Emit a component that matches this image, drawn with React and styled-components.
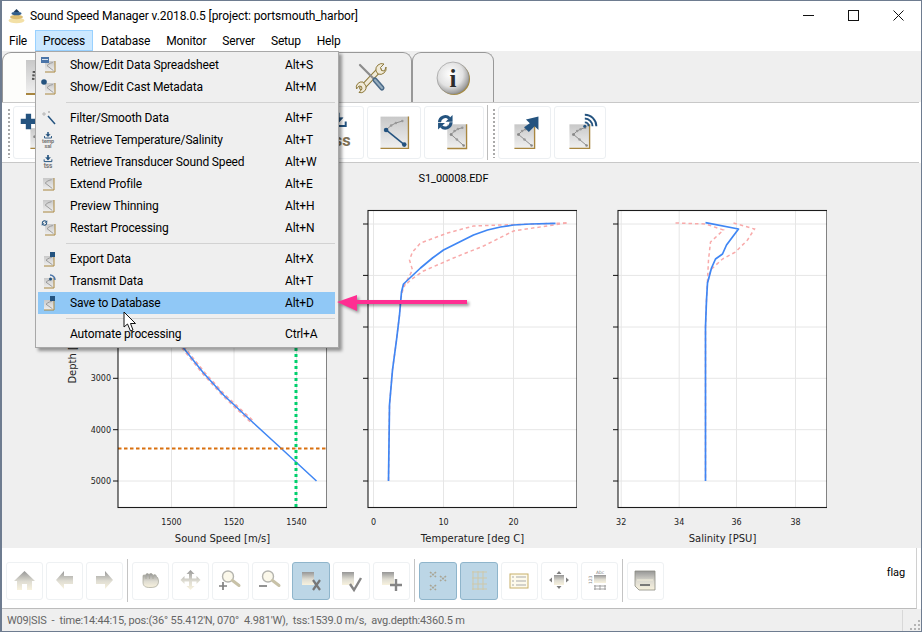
import React from "react";
import styled, { createGlobalStyle } from "styled-components";

const UI_FONT = `Roboto, "Noto Sans", sans-serif`;
const PLOT_FONT = `"DejaVu Sans", sans-serif`;

const GlobalStyle = createGlobalStyle`
  html, body { margin: 0; padding: 0; background: #fff; overflow: hidden; }
  body { font-family: ${UI_FONT}; font-size: 12px; color: #000; letter-spacing: -0.1px; }
`;

const Window = styled.div`
  position: relative;
  box-sizing: border-box;
  width: 922px;
  height: 632px;
  display: flex;
  flex-direction: column;
  background: #fff;
  border: 1px solid #6e7c90;
  border-left-width: 2px;
  overflow: hidden;
`;

const TitleBar = styled.div`
  height: 29px;
  flex: none;
  display: flex;
  align-items: center;
  padding-left: 6px;
`;

const TitleText = styled.span`
  margin: 1px 0 0 5px;
  white-space: nowrap;
`;

const WindowControls = styled.div`
  margin-left: auto;
  display: flex;
  align-items: center;
  gap: 34px;
  padding-right: 17px;
`;

const MenuBar = styled.nav`
  height: 21px;
  flex: none;
  display: flex;
  align-items: stretch;
  margin-left: -1px;
  letter-spacing: -0.2px;
`;

const MenuTitle = styled.div`
  display: flex;
  align-items: center;
  padding: 1px 7px 0;
  box-sizing: border-box;
  border: 1px solid ${(p) => (p.$open ? "#99d1ff" : "transparent")};
  background: ${(p) => (p.$open ? "#cce8ff" : "transparent")};
`;

const TabBar = styled.div`
  height: 51px;
  flex: none;
  display: flex;
  align-items: flex-end;
  background: #efefef;
`;

const Tab = styled.div`
  box-sizing: border-box;
  width: 82px;
  height: 50px;
  display: flex;
  align-items: center;
  justify-content: center;
  background: ${(p) => (p.$selected ? "#fdfdfb" : "#efefef")};
  border: 1px solid #989898;
  border-bottom: none;
  border-radius: 9px 9px 0 0;
`;

const Toolbar = styled.div`
  height: 61px;
  flex: none;
  box-sizing: border-box;
  display: flex;
  align-items: center;
  gap: 3px;
  margin-right: 2px;
  padding-left: 4px;
  background: #fff;
  border: 1px solid #c8c8c8;
  border-left: none;
  border-right: none;
`;

const Grip = styled.div`
  width: 2px;
  height: 50px;
  margin: 0 ${(p) => p.$right}px 0 ${(p) => p.$left}px;
  background-image: radial-gradient(circle, #aaa 0.8px, transparent 1px);
  background-size: 2px 4px;
`;

const ToolButton = styled.div`
  box-sizing: border-box;
  flex: none;
  width: ${(p) => p.$w}px;
  height: 53px;
  border: 1px solid #eceff2;
  border-radius: 3px;
  display: flex;
  align-items: center;
  justify-content: center;
`;

const ToolSep = styled.div`
  width: 1px;
  height: 55px;
  background: #bdbdbd;
`;

const Canvas = styled.main`
  flex: 1;
  min-height: 0;
  display: flex;
  flex-direction: column;
  background: #efefef;
`;

const PlotTitle = styled.div`
  height: 37px;
  flex: none;
  box-sizing: border-box;
  display: flex;
  align-items: center;
  justify-content: center;
  padding: 0 16px 6px 0;
  font-size: 11px;
`;

const PlotRow = styled.div`
  display: flex;
  padding-left: 58px;
`;

const BottomBar = styled.div`
  height: 61px;
  flex: none;
  box-sizing: border-box;
  display: flex;
  align-items: flex-start;
  gap: 3px;
  padding: 14px 0 0 4px;
  margin-right: 4px;
  background: #fff;
  border-bottom: 1px solid #bcbcbc;
  border-right: 1px solid #d0d0d0;
`;

const BarButton = styled.div`
  box-sizing: border-box;
  flex: none;
  width: ${(p) => (p.$active ? 38 : 37)}px;
  height: 38px;
  border: 1px solid ${(p) => (p.$active ? "#8fb5cb" : "#eef1f3")};
  border-radius: 3px;
  background: ${(p) => (p.$active ? "#bcd6e6" : "#fff")};
  svg { display: block; margin: -1px; }
`;

const BarSep = styled.div`
  width: 1px;
  height: 43px;
  margin: -3px 1px 0;
  background: #c4c4c4;
`;

const FlagLabel = styled.span`
  margin: 1px 11px 0 auto;
  font-size: 11px;
  line-height: 20px;
`;

const StatusBar = styled.footer`
  flex: none;
  height: 22px;
  box-sizing: border-box;
  display: flex;
  align-items: center;
  padding: 1px 0 0 5px;
  background: #efefef;
  color: #666;
  font-size: 11px;
  letter-spacing: -0.19px;
  white-space: pre;
`;

const StatusGrip = styled.div`
  margin-left: auto;
  display: flex;
  align-items: flex-end;
  height: 100%;
  border-left: 1px solid #d8d8d8;
  padding-left: 6px;
  box-sizing: border-box;
`;

const Menu = styled.div`
  position: absolute;
  left: 33px;
  top: 50px;
  width: 304px;
  box-sizing: border-box;
  padding: 2px 3px 2px 2px;
  background: #efefef;
  border: 1px solid #a8a8a8;
  box-shadow: 3px 3px 3px rgba(0, 0, 0, 0.38);
  z-index: 3;
`;

const MenuRow = styled.div`
  height: 22px;
  display: flex;
  align-items: center;
  letter-spacing: -0.15px;
  background: ${(p) => (p.$active ? "#90c8f6" : "transparent")};
`;

const MenuIconSlot = styled.div`
  width: 32px;
  padding-left: 3px;
  box-sizing: border-box;
  display: flex;
  align-items: center;
  svg { overflow: visible; }
`;

const MenuLabel = styled.span`
  width: 215px;
  white-space: nowrap;
`;

const MenuDivider = styled.div`
  height: 1px;
  margin: 4px 0 4px 28px;
  background: #d2d2d2;
`;

const ArrowOverlay = styled.svg`
  position: absolute;
  left: 331px;
  top: 288px;
  z-index: 4;
  filter: drop-shadow(2px 2px 1.5px rgba(0, 0, 0, 0.4));
`;

const CursorOverlay = styled.svg`
  position: absolute;
  left: 120px;
  top: 310px;
  z-index: 5;
`;

const HiddenDefs = styled.svg`
  display: block;
  position: absolute;
  width: 0;
  height: 0;
`;

const Defs = () => (
  <HiddenDefs aria-hidden="true">
    <defs>
      <linearGradient id="paper" x1="0" y1="0" x2="0" y2="1">
        <stop offset="0" stopColor="#c8c8c8" />
        <stop offset="1" stopColor="#f0f0f0" />
      </linearGradient>
      <linearGradient id="fade" x1="0" y1="0" x2="0" y2="1">
        <stop offset="0" stopColor="#969696" />
        <stop offset="0.55" stopColor="#dedcd2" />
        <stop offset="1" stopColor="#f8f2de" />
      </linearGradient>
      <radialGradient id="silver" cx="0.42" cy="0.38" r="0.65">
        <stop offset="0" stopColor="#ffffff" />
        <stop offset="0.6" stopColor="#e2e2e2" />
        <stop offset="1" stopColor="#8e8e8e" />
      </radialGradient>
    </defs>
  </HiddenDefs>
);

const NAVY = "#24537f";

// sheet of paper with a small sound speed profile on it
const Paper = ({ x, y, w, h, dark }) => {
  const px = (f) => x + f * w;
  const py = (f) => y + f * h;
  const r = w > 15 ? 1.3 : 0;
  const upper = [[0.78, 0.14], [0.55, 0.2], [0.38, 0.28], [0.2, 0.42]];
  const knee = upper[3];
  const end = [0.85, 0.88];
  return (
    <g>
      <rect x={x} y={y} width={w} height={h} fill="url(#paper)" />
      <path d={`M${x + w} ${y}V${y + h}H${x}`} fill="none" stroke="#a8863f" strokeWidth={w > 15 ? 1.4 : 1} />
      <polyline points={upper.map((p) => `${px(p[0])},${py(p[1])}`).join(" ")} fill="none" stroke="#8a8a8a" strokeWidth={w > 15 ? 1 : 0.8} />
      <line x1={px(knee[0])} y1={py(knee[1])} x2={px(end[0])} y2={py(end[1])} stroke={dark ? NAVY : "#8a8a8a"} strokeWidth={dark ? 1.6 : w > 15 ? 1 : 0.8} />
      {r > 0 && upper.map((p) => <circle key={p[0]} cx={px(p[0])} cy={py(p[1])} r={r} fill="#999" />)}
      {r > 0 && <circle cx={px(knee[0])} cy={py(knee[1])} r={dark ? 2.4 : r} fill={dark ? NAVY : "#888"} />}
      {r > 0 && <circle cx={px(end[0])} cy={py(end[1])} r={dark ? 2.4 : r} fill={dark ? NAVY : "#888"} />}
      {r > 0 && !dark && <circle cx={px(0.5)} cy={py(0.63)} r={r} fill="#999" />}
    </g>
  );
};

const Download = ({ cx, y, s = 1 }) => (
  <g transform={`translate(${cx} ${y}) scale(${s})`} fill="none" stroke={NAVY}>
    <path d="M0 0V8" strokeWidth="3" />
    <path d="M-4.5 4.5L0 9.5L4.5 4.5Z" fill={NAVY} strokeWidth="0.6" />
    <path d="M-7 8V12H7V8" strokeWidth="1.8" />
  </g>
);

const Refresh = ({ cx, cy, r = 6, w = 3.2 }) => (
  <g fill="none" stroke={NAVY} strokeWidth={w}>
    <path d={`M${cx - r} ${cy}A${r} ${r} 0 0 1 ${cx + r * 0.7} ${cy - r * 0.7}`} />
    <path d={`M${cx + r} ${cy}A${r} ${r} 0 0 1 ${cx - r * 0.7} ${cy + r * 0.7}`} />
    <path d={`M${cx + r * 1.25} ${cy - r * 1.25}V${cy - r * 0.1}H${cx + r * 0.05}Z`} fill={NAVY} stroke="none" />
    <path d={`M${cx - r * 1.25} ${cy + r * 1.25}V${cy + r * 0.1}H${cx - r * 0.05}Z`} fill={NAVY} stroke="none" />
  </g>
);

const Signal = ({ cx, cy }) => (
  <g fill="none" stroke={NAVY} strokeWidth="2">
    <path d={`M${cx} ${cy - 4}A4 4 0 0 1 ${cx + 4} ${cy}`} />
    <path d={`M${cx} ${cy - 8}A8 8 0 0 1 ${cx + 8} ${cy}`} />
    <path d={`M${cx} ${cy - 12}A12 12 0 0 1 ${cx + 12} ${cy}`} />
    <circle cx={cx} cy={cy} r="1.6" fill={NAVY} stroke="none" />
  </g>
);

// icons of the upper toolbar, drawn on the whole button face (height 53)
const TOP_TOOLS = [
  { w: 56, draw: (
    <>
      <Paper x={17} y={22} w={22} h={21} />
      <path d="M15 7V23M7 15H23" stroke={NAVY} strokeWidth="5.5" />
    </>
  ) },
  { w: 56, draw: <Paper x={14} y={10} w={28} h={33} /> },
  { w: 56, draw: <Paper x={14} y={10} w={28} h={33} /> },
  { w: 56, draw: <Paper x={14} y={10} w={28} h={33} /> },
  { w: 56, draw: <Paper x={14} y={10} w={28} h={33} /> },
  { w: 56, draw: (
    <>
      <Download cx={30} y={6} s={1.15} />
      <text x={43} y={40} textAnchor="end" fontFamily={UI_FONT} fontWeight="700" fontSize="17" fill="#7e7054">tss</text>
    </>
  ) },
  { w: 54, draw: <Paper x={13} y={10} w={29} h={33} dark /> },
  { w: 60, draw: (
    <>
      <Paper x={23} y={18} w={20} h={25} />
      <Refresh cx={21} cy={16} />
    </>
  ) },
];

const Arrowed = () => (
  <>
    <Paper x={16} y={18} w={21} h={25} />
    <path d="M26 21L32 17L28 13L41 10V24L37 20L31 26Z" fill={NAVY} />
  </>
);

const Signalled = () => (
  <>
    <Paper x={15} y={18} w={21} h={25} />
    <Signal cx={31} cy={20} />
  </>
);

const TabPaper = () => (
  <svg width="36" height="38" viewBox="0 0 36 38">
    <rect x="1" y="1" width="34" height="34" fill="url(#paper)" />
    <path d="M1 35H35" stroke="#a8863f" strokeWidth="2" />
    <path d="M9 12L8 22" stroke="#555" strokeWidth="2.5" strokeDasharray="2 1.5" />
  </svg>
);

const ToolsIcon = () => (
  <svg width="32" height="32" viewBox="0 0 32 32">
    <g fill="none" strokeLinecap="round">
      <path d="M7 26L24 8" stroke="#8e7a3c" strokeWidth="5.5" />
      <path d="M7 26L24 8" stroke="#f0ead8" strokeWidth="3.5" />
      <path d="M5 3L19 17" stroke="#8c8c8c" strokeWidth="2.2" />
      <path d="M20 18L27 26" stroke="#4a6a88" strokeWidth="5" />
      <path d="M20 18L27 26" stroke="#97aebf" strokeWidth="2" />
    </g>
    <path d="M21 9A6 6 0 0 1 29 2L25.5 5.5L26.5 8.5L29.5 9L31 5A6 6 0 0 1 23 12Z" fill="#f0ead8" stroke="#8e7a3c" />
    <path d="M9 24A5.5 5.5 0 0 1 2 30.5L5 27L4.5 24.5L2 24L-0.5 27A5.5 5.5 0 0 1 6 20Z" fill="#f0ead8" stroke="#8e7a3c" transform="translate(2 0)" />
  </svg>
);

const InfoIcon = () => (
  <svg width="36" height="36" viewBox="0 0 36 36">
    <circle cx="19" cy="19" r="16" fill="#a58a3e" />
    <circle cx="18" cy="18" r="16" fill="url(#silver)" stroke="#8f8f8f" strokeWidth="0.6" />
    <text x="18" y="27" textAnchor="middle" fontFamily={`"Liberation Serif", serif`} fontWeight="700" fontSize="25" fill="#2c2c2c">i</text>
  </svg>
);

const AppIcon = () => (
  <svg width="17" height="16" viewBox="0 0 17 16">
    <ellipse cx="8.5" cy="12.5" rx="8" ry="2.8" fill="#f3e0a6" />
    <ellipse cx="8.5" cy="9" rx="6.5" ry="2.2" fill="#dcbd72" />
    <ellipse cx="8.5" cy="5.5" rx="5" ry="1.8" fill="#335f8c" />
    <path d="M8.5 1L5.5 4H11.5Z" fill="#1d3c5e" />
  </svg>
);

const Lens = ({ children }) => (
  <>
    <circle cx="16" cy="14.5" r="5.5" fill="#fbf8ea" stroke="#b4b4ae" strokeWidth="1.4" />
    <path d="M20.5 18.5L27 23.5" stroke="#c8c2a8" strokeWidth="3" strokeLinecap="round" />
    {children}
  </>
);

// icons of the lower toolbar, 37 x 37
const BAR_TOOLS = [
  { draw: <path d="M18.5 9L29 19H26V28H21V22H16V28H11V19H8Z" fill="url(#fade)" /> },
  { draw: <path d="M10 18L18 9V14H27V22H18V27Z" fill="url(#fade)" /> },
  { draw: <path d="M27 18L19 9V14H10V22H19V27Z" fill="url(#fade)" /> },
  { sep: true },
  { draw: (
    <>
      <path d="M11 14C11 12.5 13 12.5 13.5 14C13.5 11 16.5 11 17 13C17.5 11 20.5 11 21 13.5C21.5 12 24.5 12.5 24.5 14.5C26.5 15.5 27 20 26 22C25 25 22 25.5 18 25.5C13 25.5 11 24 11 20Z" fill="url(#fade)" stroke="#a4a496" strokeWidth="0.7" />
      <path d="M14 14V17M17.5 13.5V17M21 14V17" stroke="#a4a496" strokeWidth="0.7" />
    </>
  ) },
  { draw: <path d="M18.5 8L22.5 12H20V16.5H24.5V14L28.5 18L24.5 22V19.5H20V24H22.5L18.5 28L14.5 24H17V19.5H12.5V22L8.5 18L12.5 14V16.5H17V12H14.5Z" fill="url(#fade)" /> },
  { draw: <Lens><path d="M11 20V28M7 24H15" stroke="#808080" strokeWidth="1.7" /></Lens> },
  { draw: <Lens><path d="M7 24H15" stroke="#808080" strokeWidth="1.7" /></Lens> },
  { active: true, draw: (
    <>
      <rect x="10" y="10" width="12" height="13" fill="url(#fade)" />
      <path d="M21 18L28 28M28 18L21 28" stroke="#777" strokeWidth="2.2" />
    </>
  ) },
  { draw: (
    <>
      <rect x="9" y="10" width="12" height="13" fill="url(#fade)" />
      <path d="M17 22L21 28L28 16" fill="none" stroke="#858585" strokeWidth="2.4" />
    </>
  ) },
  { draw: (
    <>
      <rect x="9" y="10" width="12" height="13" fill="url(#fade)" />
      <path d="M23 17V29M17 23H29" stroke="#858585" strokeWidth="2.4" />
    </>
  ) },
  { sep: true },
  { active: true, draw: (
    <g fill="none" stroke="#a9a595" strokeWidth="1.6" strokeDasharray="2 1">
      <path d="M11 10L17 15M17 10L11 15" />
      <path d="M21 14L27 19M27 14L21 19" />
      <path d="M11 23L17 28M17 23L11 28" />
    </g>
  ) },
  { active: true, draw: <path d="M12 10H27M12 16H27M12 22H27M12 27H27M13 9V28M18 9V28M23 9V28" fill="none" stroke="#cfc8a8" strokeWidth="1" /> },
  { draw: (
    <>
      <rect x="9" y="12" width="18" height="14" fill="#fdfaec" stroke="#c8b06a" />
      <path d="M15 15H25M15 19H25M15 23H25M11 15H13M11 19H13M11 23H13" stroke="#a9a9a9" strokeWidth="1.1" />
    </>
  ) },
  { draw: (
    <>
      <rect x="13" y="13" width="10" height="10" fill="url(#fade)" />
      <path d="M18 9L15.5 12H20.5ZM18 27L15.5 24H20.5ZM8 18L11 15.5V20.5ZM28 18L25 15.5V20.5Z" fill="#7e7e7e" />
    </>
  ) },
  { draw: (
    <>
      <rect x="13" y="13" width="12" height="8" fill="url(#fade)" />
      <path d="M13 24H25M13 27H25M14 23V28M19 23V28M24 23V28" stroke="#999" strokeWidth="0.9" />
      <text x="19" y="12" textAnchor="middle" fontFamily={PLOT_FONT} fontSize="4.5" fill="#888">Abc</text>
      <text transform="translate(11 22) rotate(-90)" fontFamily={PLOT_FONT} fontSize="4.5" fill="#888">123</text>
    </>
  ) },
  { sep: true },
  { draw: (
    <>
      <path d="M8 9H28V28H12L8 24Z" fill="url(#fade)" stroke="#8a8a80" strokeWidth="0.8" />
      <path d="M10 18H26" stroke="#f5f0dc" strokeWidth="1" />
      <path d="M13 23H23" stroke="#6d6d6d" strokeWidth="1.8" />
    </>
  ) },
];

const MiniPaper = () => <Paper x={4} y={4} w={10} h={11} />;

const MiniExport = () => (
  <>
    <Paper x={3} y={5} w={10} h={10} />
    <rect x="9" y="1" width="5" height="5" fill={NAVY} />
  </>
);

const MENU_GROUPS = [
  [
    { label: "Show/Edit Data Spreadsheet", key: "Alt+S", icon: (
      <>
        <MiniPaper />
        <rect x="0" y="0" width="8" height="6" fill="#4a74a8" />
        <rect x="1" y="2" width="6" height="1" fill="#d9e4f0" />
      </>
    ) },
    { label: "Show/Edit Cast Metadata", key: "Alt+M", icon: (
      <>
        <MiniPaper />
        <circle cx="3" cy="3" r="2.8" fill={NAVY} />
      </>
    ) },
  ],
  [
    { label: "Filter/Smooth Data", key: "Alt+F", icon: (
      <>
        <path d="M7 6L14 14" stroke={NAVY} strokeWidth="1.5" />
        <path d="M3 2V6M1 4H5M8 1V3M7 2H9" stroke="#aaa" strokeWidth="0.8" />
      </>
    ) },
    { label: "Retrieve Temperature/Salinity", key: "Alt+T", icon: (
      <>
        <Download cx={7} y={0} s={0.5} />
        <text x="7" y="11" textAnchor="middle" fontFamily={UI_FONT} fontWeight="700" fontSize="5.5" fill="#777">temp</text>
        <text x="7" y="16" textAnchor="middle" fontFamily={UI_FONT} fontWeight="700" fontSize="5.5" fill="#777">sal</text>
      </>
    ) },
    { label: "Retrieve Transducer Sound Speed", key: "Alt+W", icon: (
      <>
        <Download cx={7} y={1} s={0.55} />
        <text x="7" y="14" textAnchor="middle" fontFamily={UI_FONT} fontWeight="700" fontSize="6.5" fill="#777">tss</text>
      </>
    ) },
    { label: "Extend Profile", key: "Alt+E", icon: <Paper x={2} y={2} w={11} h={12} /> },
    { label: "Preview Thinning", key: "Alt+H", icon: <Paper x={2} y={2} w={11} h={12} /> },
    { label: "Restart Processing", key: "Alt+N", icon: (
      <>
        <MiniPaper />
        <Refresh cx={3.5} cy={3} r={2.2} w={1.1} />
      </>
    ) },
  ],
  [
    { label: "Export Data", key: "Alt+X", icon: <MiniExport /> },
    { label: "Transmit Data", key: "Alt+T", icon: (
      <>
        <Paper x={3} y={5} w={10} h={10} />
        <path d="M9 2A5 5 0 0 1 14 7" fill="none" stroke="#4a74a8" strokeWidth="1.5" />
        <circle cx="9.5" cy="6" r="1.5" fill={NAVY} />
      </>
    ) },
    { label: "Save to Database", key: "Alt+D", active: true, icon: <MiniExport /> },
  ],
  [{ label: "Automate processing", key: "Ctrl+A" }],
];

// depth grid; the labels of the first three sit behind the open menu in the picture
const Y_TICKS = [224, 275.4, 327, 378.3, 429.7, 481];
const Y_LABELS = [null, null, null, "3000", "4000", "5000"];

const PLOTS = [
  {
    left: 117.5, margin: 58, label: "Sound Speed [m/s]", labelled: true,
    grid: [[171, "1500"], [233.5, "1520"], [296, "1540"]],
    blue: "M155 224L150 250L158 300L183 348L203 373L223 395L253 423L277 445L316 481",
    pink: ["M150 224L148 250L157 300L184.200 347.500L204.200 372.500L224.200 394.500L254 422", "M160 224L152 250L160 300L182 348.500L202 373.500L222 395.500L252 424"],
  },
  {
    left: 367.5, margin: 41, label: "Temperature [deg C]",
    grid: [[373, "0"], [443, "10"], [513, "20"]],
    blue: "M555 223.3L530 224L513 225L500 227L487 230L473 235L457 243L443 250L432 258L420 268L403 284L401 292L399 315L396 340L392 370L389 405L388 481",
    pink: [
      "M566 223L500 225L473 226L447 233L420 243L412 252L409 260L412 270L403 287L400 300L399 315L396 340L392 370L389 405L388 481",
      "M566 223L513 231L483 246L453 258L423 271L410 280L403 287",
    ],
  },
  {
    left: 617.5, margin: 41, label: "Salinity [PSU]",
    grid: [[620.7, "32"], [678.7, "34"], [736, "36"], [795, "38"]],
    blue: "M705 222.7L738 229L732 237L726 245L722 254L715 259L711 268L707 283L706 300L705 327L705 481",
    pink: [
      "M675 223L705 224L723 230L710 242L708 260L707 280L706 300L705 327L705 481",
      "M733 223L754 229L747 240L735 252L722 259L710 270L707 283",
    ],
  },
];

const PlotSvg = styled.svg`
  display: block;
  flex: none;
  overflow: hidden;
  font-family: ${PLOT_FONT};
  letter-spacing: 0;
`;

const Plot = ({ plot }) => {
  const { left, margin, grid, label, blue, pink, labelled } = plot;
  const right = left + 209;
  return (
    <PlotSvg width={209 + margin} height={348} viewBox={`${left - margin} 200 ${209 + margin} 348`}>
      <rect x={left} y="210.5" width="209" height="297" fill="#fff" />
      {grid.map(([x]) => <line key={x} x1={x} x2={x} y1="210" y2="507" stroke="#e6e6e6" />)}
      {Y_TICKS.map((y) => <line key={y} x1={left} x2={right} y1={y} y2={y} stroke="#e6e6e6" />)}
      {pink.map((d) => <path key={d} d={d} fill="none" stroke="#f8aaaa" strokeWidth="1.5" strokeDasharray="3.5 3" />)}
      <path d={blue} fill="none" stroke="#3f86f4" strokeLinejoin="round" strokeWidth={labelled ? 1.5 : 1.7} />
      {labelled && <line x1="295.5" x2="295.5" y1="210" y2="507" stroke="#00d06c" strokeWidth="3" strokeDasharray="3 3" />}
      {labelled && <line x1={left} x2={right} y1="448.5" y2="448.5" stroke="#d9700f" strokeWidth="2.2" strokeDasharray="3.5 2.5" />}
      <rect x={left} y="210.5" width="209" height="297" fill="none" stroke="#1c1c1c" strokeWidth="1.1" />
      {Y_TICKS.map((y, i) => (
        <g key={y}>
          <line x1={left - 5} x2={left} y1={y} y2={y} stroke="#111" />
          {labelled && Y_LABELS[i] && <text x={left - 7} y={y + 3} textAnchor="end" fontSize="8" fill="#222">{Y_LABELS[i]}</text>}
        </g>
      ))}
      {grid.map(([x, t]) => <text key={t} x={x} y="525" textAnchor="middle" fontSize="8" fill="#222">{t}</text>)}
      <text x={left + 104.5} y="541.5" textAnchor="middle" fontSize="10" fill="#222">{label}</text>
      {labelled && <text transform="translate(75 358) rotate(-90)" textAnchor="middle" fontSize="10" fill="#222">Depth [m]</text>}
    </PlotSvg>
  );
};

const MENUS = ["File", "Process", "Database", "Monitor", "Server", "Setup", "Help"];

const ToolFace = ({ w, children }) => (
  <svg width={w} height="53" viewBox={`0 0 ${w} 53`}>{children}</svg>
);

export default function App() {
  return (
    <Window>
      <GlobalStyle />
      <Defs />
      <TitleBar>
        <AppIcon />
        <TitleText>Sound Speed Manager v.2018.0.5 [project: portsmouth_harbor]</TitleText>
        <WindowControls>
          <svg width="11" height="11" viewBox="0 0 11 11"><path d="M0 5.5H11" stroke="#111" /></svg>
          <svg width="11" height="11" viewBox="0 0 11 11"><rect x="0.5" y="0.5" width="10" height="10" fill="none" stroke="#111" /></svg>
          <svg width="11" height="11" viewBox="0 0 11 11"><path d="M0.5 0.5L10.5 10.5M10.5 0.5L0.5 10.5" stroke="#111" /></svg>
        </WindowControls>
      </TitleBar>

      <MenuBar>
        {MENUS.map((m) => <MenuTitle key={m} $open={m === "Process"}>{m}</MenuTitle>)}
      </MenuBar>

      <TabBar>
        <Tab $selected><TabPaper /></Tab>
        <Tab />
        <Tab />
        <Tab />
        <Tab><ToolsIcon /></Tab>
        <Tab><InfoIcon /></Tab>
      </TabBar>

      <Toolbar>
        <Grip $left={2} $right={0} />
        {TOP_TOOLS.map((t, i) => (
          <ToolButton key={i} $w={t.w}><ToolFace w={t.w}>{t.draw}</ToolFace></ToolButton>
        ))}
        <ToolSep />
        <Grip $left={2} $right={0} />
        <ToolButton $w={53}><ToolFace w={53}><Arrowed /></ToolFace></ToolButton>
        <ToolButton $w={52}><ToolFace w={52}><Signalled /></ToolFace></ToolButton>
      </Toolbar>

      <Canvas>
        <PlotTitle>S1_00008.EDF</PlotTitle>
        <PlotRow>
          {PLOTS.map((p) => <Plot key={p.label} plot={p} />)}
        </PlotRow>
      </Canvas>

      <BottomBar>
        {BAR_TOOLS.map((t, i) =>
          t.sep ? (
            <BarSep key={i} />
          ) : (
            <BarButton key={i} $active={t.active}>
              <svg width="37" height="38" viewBox="0 0 37 38">{t.draw}</svg>
            </BarButton>
          )
        )}
        <FlagLabel>flag</FlagLabel>
      </BottomBar>

      <StatusBar>
        {"W09|SIS  -  time:14:44:15, pos:(36° 55.412'N, 070°  4.981'W),  tss:1539.0 m/s,  avg.depth:4360.5 m"}
        <StatusGrip>
          <svg width="12" height="12" viewBox="0 0 12 12" fill="#b4b4b4">
            <rect x="9" y="9" width="2" height="2" />
            <rect x="5" y="9" width="2" height="2" />
            <rect x="1" y="9" width="2" height="2" />
            <rect x="9" y="5" width="2" height="2" />
            <rect x="5" y="5" width="2" height="2" />
            <rect x="9" y="1" width="2" height="2" />
          </svg>
        </StatusGrip>
      </StatusBar>

      <Menu>
        {MENU_GROUPS.map((group, g) => (
          <React.Fragment key={g}>
            {g > 0 && <MenuDivider />}
            {group.map((item) => (
              <MenuRow key={item.label} $active={item.active}>
                <MenuIconSlot>
                  {item.icon && <svg width="16" height="16" viewBox="0 0 16 16">{item.icon}</svg>}
                </MenuIconSlot>
                <MenuLabel>{item.label}</MenuLabel>
                <span>{item.key}</span>
              </MenuRow>
            ))}
          </React.Fragment>
        ))}
      </Menu>

      <ArrowOverlay width="142" height="30" viewBox="0 0 142 30">
        <path d="M4 13L24 6V11H134V15H24V22Z" fill="#ff2e92" />
      </ArrowOverlay>

      <CursorOverlay width="18" height="24" viewBox="0 0 18 24">
        <path d="M2 1V16L5.5 13L8.5 20L11 19L8.5 12.5L13.5 12.5Z" fill="#fff" stroke="#111" strokeWidth="1" />
      </CursorOverlay>
    </Window>
  );
}
